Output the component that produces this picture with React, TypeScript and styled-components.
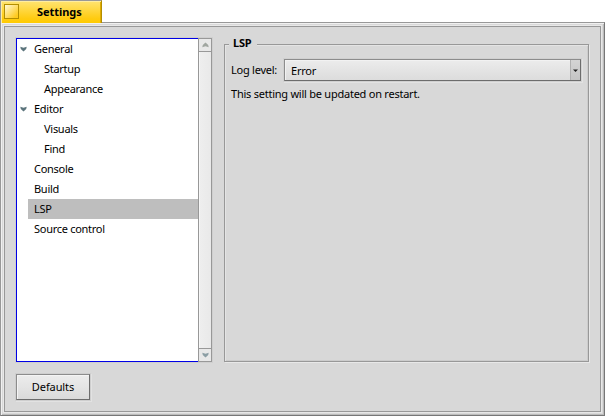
import React from "react";
import styled, { createGlobalStyle } from "styled-components";

const Global = createGlobalStyle`
  * { box-sizing: border-box; }
  html, body { margin: 0; background: #fff; overflow: hidden; }
  body { font: 11px/20px "Noto Sans", sans-serif; letter-spacing: -0.24px; color: #000; }
`;

const Desktop = styled.div`
  width: 605px;
  height: 416px;
  display: flex;
  flex-direction: column;
`;

const TitleTab = styled.header`
  width: 102px;
  height: 23px;
  flex: none;
  margin-bottom: -1px;
  z-index: 1;
  display: flex;
  align-items: flex-start;
  padding: 3px 0 0 3px;
  border: 1px solid #989898;
  border-right-color: #b48e00;
  border-bottom: 0;
  box-shadow: inset 1px 1px 0 #ffeda0, inset -1px 0 0 #e0ac00;
  background: linear-gradient(#ffe472, #ffcb10 80%, #ffcb00);
`;

const CloseBox = styled.button`
  width: 15px;
  height: 15px;
  padding: 0;
  border: 1px solid #b48e00;
  background: linear-gradient(135deg, #fff9d8, #ffcb20 85%);
`;

const Title = styled.h1`
  margin: -2px 0 0 18px;
  font-size: 11px;
  font-weight: 700;
  line-height: 20px;
  letter-spacing: -0.05px;
`;

const Frame = styled.main`
  height: 394px;
  flex: none;
  border: 1px solid #989898;
  border-right-color: #777;
  border-bottom-color: #777;
  background: #d8d8d8;
  padding: 3px;
  box-shadow: inset 1px 1px 0 #f0f0f0, inset -1px -1px 0 #bcbcbc;
`;

const Content = styled.div`
  height: 100%;
  border: 1px solid #989898;
  outline: 1px solid #e8e8e8;
  background: #d8d8d8;
  padding: 11px 11px;
  display: flex;
  flex-direction: column;
  justify-content: space-between;
`;

const Panes = styled.div`
  height: 324px;
  display: flex;
  gap: 12px;
`;

const ListView = styled.div`
  width: 196px;
  display: flex;
  box-shadow: 0 0 0 1px #cfcfcf;
`;

const Tree = styled.ul`
  width: 182px;
  margin: 0;
  padding: 0 0 0 11px;
  list-style: none;
  border: 1px solid #0000e5;
  border-right: 0;
  background: #fff;
`;

const Row = styled.li<{ $child?: boolean; $selected?: boolean }>`
  height: 20px;
  display: flex;
  align-items: center;
  padding-left: ${p => (p.$child ? 16 : 6)}px;
  background: ${p => (p.$selected ? "#bebebe" : "transparent")};
  letter-spacing: -0.28px;
`;

const Latch = styled.svg`
  width: 7px;
  height: 6px;
  flex: none;
  margin: 0 7px 0 -14px;
`;

const ScrollBar = styled.div`
  width: 14px;
  border: 1px solid #989898;
  background: #efefef;
  display: flex;
  flex-direction: column;
`;

const ScrollButton = styled.button<{ $end?: boolean }>`
  height: 13px;
  padding: 0;
  display: flex;
  align-items: center;
  justify-content: center;
  border: 0 solid #989898;
  border-width: ${p => (p.$end ? "1px 0 0" : "0 0 1px")};
  background: #e8e8e8;
  svg { width: 7px; height: 6px; display: block; }
`;

const Track = styled.div`
  flex: 1;
  background: linear-gradient(90deg, #f7f7f7 1px, #eee 1px, #e9e9e9);
`;

const Group = styled.fieldset`
  width: 365px;
  min-width: 0;
  height: 318px;
  margin: 6px 0 0;
  padding: 0;
  border: 1px solid #989898;
  box-shadow: inset 1px 1px 0 #e4e4e4, inset -1px -1px 0 #ccc, 1px 1px 0 #e8e8e8;
  display: flex;
  flex-direction: column;
`;

const GroupLabel = styled.div`
  width: 28px;
  height: 20px;
  margin: -12px 0 0 4px;
  padding-left: 4px;
  font-weight: 700;
  background: #d8d8d8;
`;

const Field = styled.div`
  height: 22px;
  margin: 6px 0 0 6px;
  display: flex;
  align-items: center;
`;

const FieldLabel = styled.label`
  width: 53px;
  white-space: nowrap;
`;

const MenuField = styled.div`
  width: 297px;
  height: 22px;
  display: flex;
  justify-content: space-between;
  border: 1px solid #8c8c8c;
  border-right-color: #6c6c6c;
  border-bottom-color: #6c6c6c;
  background: linear-gradient(#ececec, #e4e4e4 50%, #dcdcdc);
  box-shadow: inset 1px 1px 0 #f2f2f2, 0 0 0 1px #d0d0d0, 1px 1px 0 1px #e2e2e2;
  padding-left: 6px;
  line-height: 22px;
`;

const MenuMarker = styled.span`
  width: 10px;
  display: flex;
  align-items: center;
  justify-content: center;
  border-left: 1px solid #b0b0b0;
  background: linear-gradient(#d4d4d4, #c4c4c4);
  svg { width: 5px; height: 3px; }
`;

const Hint = styled.p`
  margin: 3px 0 0 6px;
`;

const PushButton = styled.button`
  width: 74px;
  height: 26px;
  padding: 0;
  border: 1px solid #8c8c8c;
  border-right-color: #6c6c6c;
  border-bottom-color: #6c6c6c;
  background: linear-gradient(#ececec, #e4e4e4 50%, #dadada);
  box-shadow: inset 1px 1px 0 #f4f4f4, 0 0 0 1px #cecece, 1px 1px 0 1px #e2e2e2;
  font: inherit;
  letter-spacing: -0.1px;
  color: inherit;
`;

type Item = { label: string; child?: boolean; expanded?: boolean; selected?: boolean };

const items: Item[] = [
  { label: "General", expanded: true },
  { label: "Startup", child: true },
  { label: "Appearance", child: true },
  { label: "Editor", expanded: true },
  { label: "Visuals", child: true },
  { label: "Find", child: true },
  { label: "Console" },
  { label: "Build" },
  { label: "LSP", selected: true },
  { label: "Source control" },
];

const DownShape = () => <path d="M0.3 0.8 L3.5 1.8 L6.7 0.8 L6.2 3 L3.5 5.5 L0.8 3 Z" />;

export default function App() {
  return (
    <Desktop>
      <Global />
      <TitleTab>
        <CloseBox aria-label="Close" />
        <Title>Settings</Title>
      </TitleTab>
      <Frame>
        <Content>
          <Panes>
            <ListView>
              <Tree>
                {items.map(i => (
                  <Row key={i.label} $child={i.child} $selected={i.selected}>
                    {i.expanded && (
                      <Latch viewBox="0 0 7 6" fill="#5c747c">
                        <DownShape />
                      </Latch>
                    )}
                    {i.label}
                  </Row>
                ))}
              </Tree>
              <ScrollBar>
                <ScrollButton aria-label="Scroll up">
                  <svg viewBox="0 0 7 6" fill="#a0a6a0">
                    <g transform="rotate(180 3.5 3)"><DownShape /></g>
                  </svg>
                </ScrollButton>
                <Track />
                <ScrollButton $end aria-label="Scroll down">
                  <svg viewBox="0 0 7 6" fill="#8b9ea4"><DownShape /></svg>
                </ScrollButton>
              </ScrollBar>
            </ListView>
            <Group>
              <GroupLabel>LSP</GroupLabel>
              <Field>
                <FieldLabel>Log level:</FieldLabel>
                <MenuField>
                  Error
                  <MenuMarker>
                    <svg viewBox="0 0 5 3" fill="#222"><path d="M0 0.5H5L2.5 3Z" /></svg>
                  </MenuMarker>
                </MenuField>
              </Field>
              <Hint>This setting will be updated on restart.</Hint>
            </Group>
          </Panes>
          <PushButton>Defaults</PushButton>
        </Content>
      </Frame>
    </Desktop>
  );
}
